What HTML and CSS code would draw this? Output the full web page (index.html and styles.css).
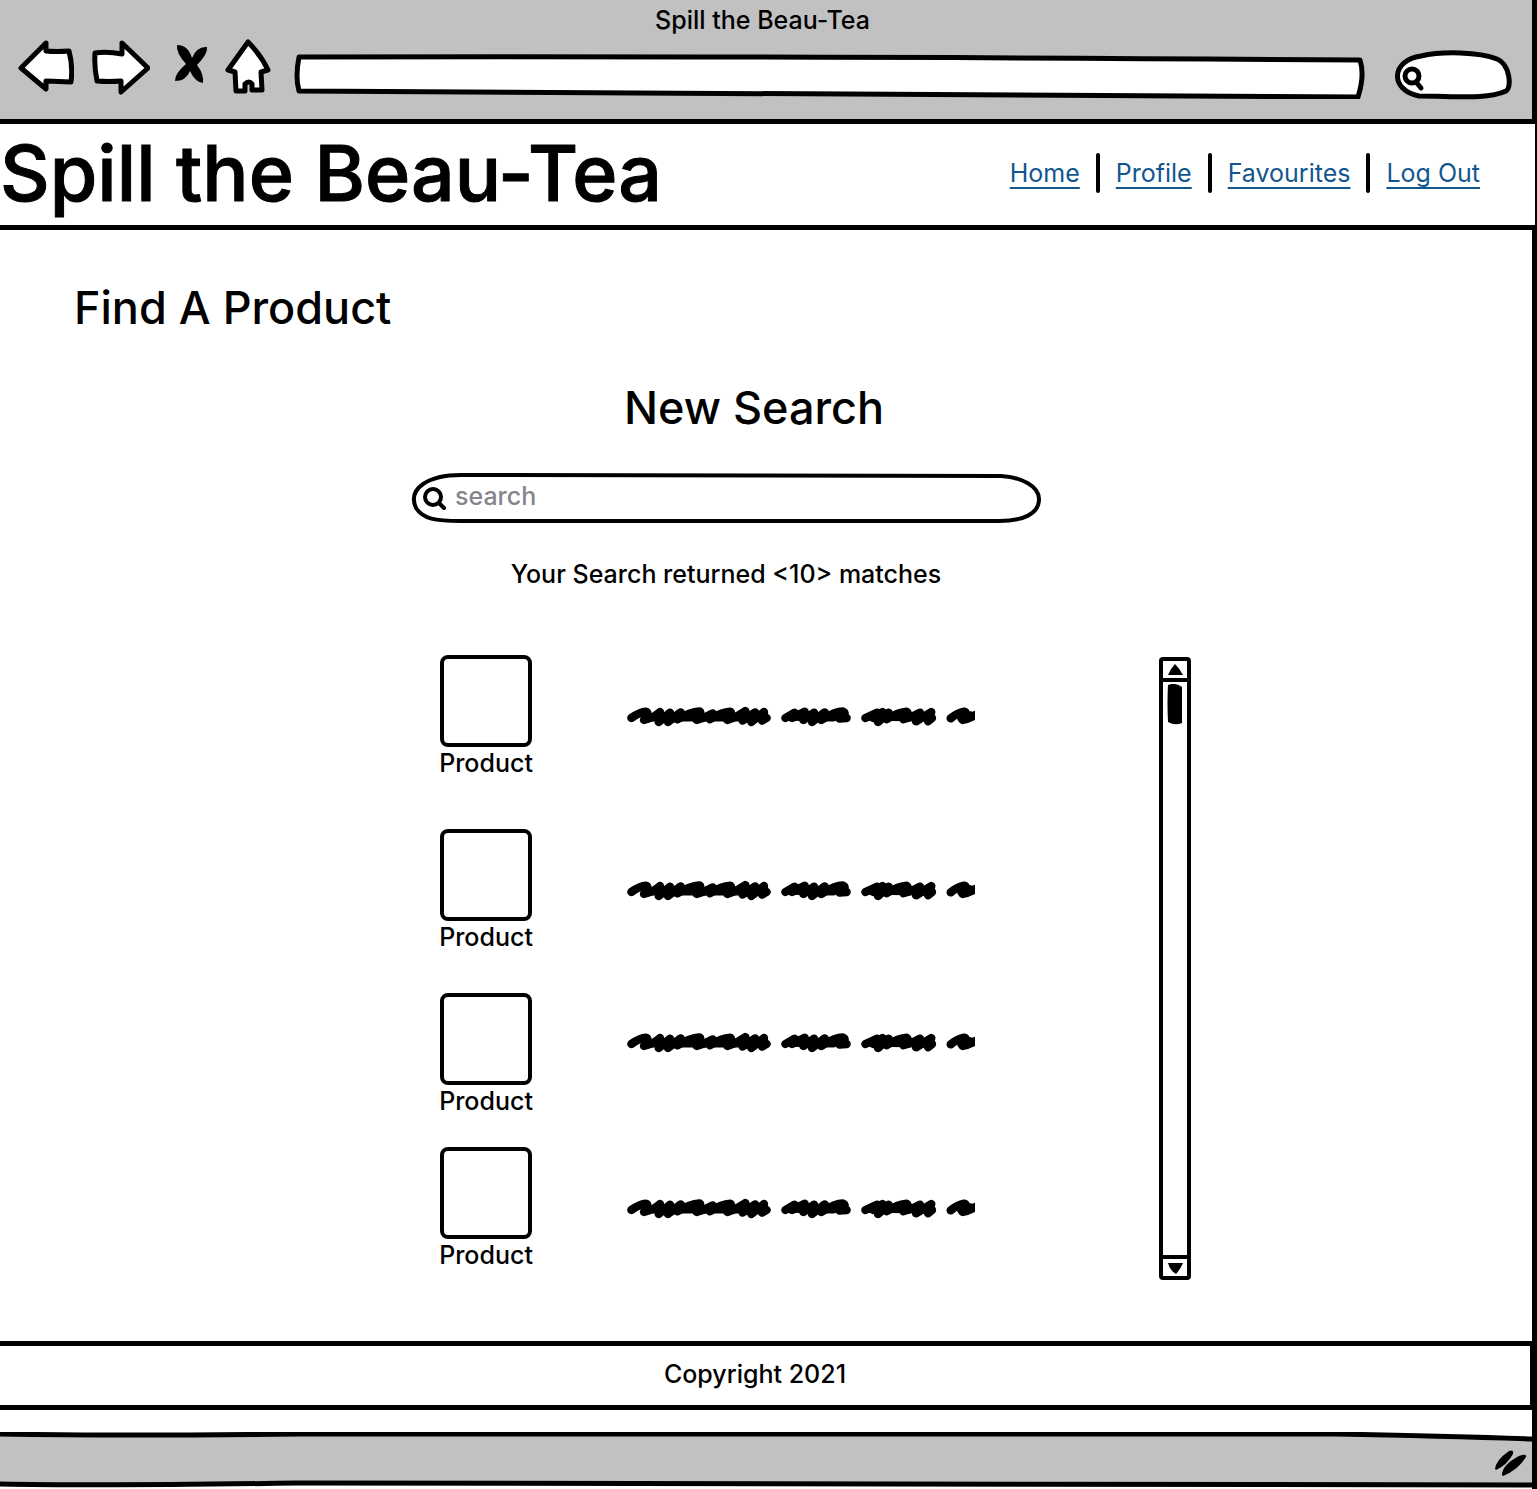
FILE: index.html
```html
<!DOCTYPE html>
<html lang="en">
<head>
<meta charset="utf-8">
<meta name="viewport" content="width=device-width, initial-scale=1">
<title>Spill the Beau-Tea</title>
<link rel="stylesheet" href="styles.css">
</head>
<body>
<svg class="defs" aria-hidden="true">
  <symbol id="scribble" viewBox="21 45 1044 72">
    <g fill="none" stroke="#000" stroke-width="25" stroke-linecap="round" stroke-linejoin="round">
      <path d="M34 84Q60 66 78 65Q88 68 72 90Q100 84 120 66L116 96L150 68L144 96L182 67Q184 76 172 88Q210 66 238 64Q246 68 230 90Q255 84 278 70L270 88Q305 66 330 65Q338 68 322 90Q350 82 376 63L368 92L405 67L394 96L432 66L426 92L440 84"/>
      <path d="M496 84L524 68L516 84L554 65L550 90L582 68L576 96L614 67Q616 78 604 90Q645 64 668 64Q684 70 658 86L680 84"/>
      <path d="M736 84L772 68L760 84L788 66L774 96L806 68L800 88Q835 66 860 65Q868 70 850 88Q880 80 900 68L888 94L934 66L924 94L936 84"/>
      <path d="M992 85Q1014 68 1032 65Q1044 68 1028 90Q1050 86 1078 68"/>
      <path d="M76 82L436 82M508 80L640 82M750 80L930 82M1024 84L1052 76"/>
    </g>
  </symbol>
</svg>
<div class="window">
  <div class="chrome">
    <p class="window-title">Spill the Beau-Tea</p>
    <div class="toolbar">
      <button class="tool" type="button" aria-label="Back">
        <svg width="56" height="54" viewBox="0 0 56 54"><path d="M28 4L3 29L28 50V42L53 43Q55 27 51 12Q38 13 28 12Z"/></svg>
      </button>
      <button class="tool" type="button" aria-label="Forward">
        <svg width="60" height="56" viewBox="0 0 60 56"><path d="M32 4L58 29L31 53V42Q19 43 7 42Q4 27 5 14Q17 12 32 15Z"/></svg>
      </button>
      <button class="tool solid" type="button" aria-label="Stop">
        <svg width="34" height="40" viewBox="0 0 34 40"><path d="M2 1Q13 1 17 14Q22 2 32 3Q33 10 22 21Q29 30 28 39Q20 38 15 27Q11 37 0 37Q0 29 11 20Q1 9 2 1Z"/></svg>
      </button>
      <button class="tool" type="button" aria-label="Home">
        <svg width="46" height="56" viewBox="0 0 46 56"><path d="M23 3L3 31L10 33L11 52H20V45Q24 41 27 45L27 51H37L36 33L43 31Q36 16 23 3Z"/></svg>
      </button>
      <label class="field address">
        <svg viewBox="0 0 1070 46" preserveAspectRatio="none" aria-hidden="true"><path vector-effect="non-scaling-stroke" d="M5 4Q500 3 1065 7Q1070 22 1063 44Q600 42 5 38Q1 24 5 4Z"/></svg>
        <input type="text" aria-label="Address">
      </label>
      <label class="field finder">
        <svg viewBox="0 0 120 50" aria-hidden="true"><path d="M26 46C-4 40-2 10 28 6C50 1 86 2 104 9C117 14 119 38 113 41C94 50 62 46 26 46Z"/><circle cx="19" cy="26" r="7"/><path d="M23 32L28 38"/></svg>
        <input type="search" aria-label="Web search">
      </label>
    </div>
  </div>

  <header class="site-header">
    <div class="brand">Spill the Beau-Tea</div>
    <nav>
      <ul class="links">
        <li><a href="#home">Home</a></li>
        <li><a href="#profile">Profile</a></li>
        <li><a href="#favourites">Favourites</a></li>
        <li><a href="#logout">Log Out</a></li>
      </ul>
    </nav>
  </header>

  <main>
    <h1>Find A Product</h1>
    <h2>New Search</h2>
    <form class="search">
      <label class="field">
        <svg class="outline" viewBox="0 0 630 52" preserveAspectRatio="none" aria-hidden="true"><path vector-effect="non-scaling-stroke" d="M50 3L590 4C610 5 628 14 628 27C628 42 612 49 588 49H50C24 49 12 47 5 36C-4 16 18 3 50 3Z"/></svg>
        <svg class="lens" width="24" height="24" viewBox="0 0 24 24" aria-hidden="true"><circle cx="10" cy="11" r="8"/><path d="M16 17L21 22"/></svg>
        <input type="search" placeholder="search" aria-label="Search products">
      </label>
    </form>
    <p class="matches">Your Search returned &lt;10&gt; matches</p>

    <section class="results">
      <ul class="products">
        <li><button class="thumb" type="button" aria-label="Open product"></button><span class="name">Product</span><svg class="text"><use href="#scribble"/></svg></li>
        <li><button class="thumb" type="button" aria-label="Open product"></button><span class="name">Product</span><svg class="text"><use href="#scribble"/></svg></li>
        <li class="raised"><button class="thumb" type="button" aria-label="Open product"></button><span class="name">Product</span><svg class="text"><use href="#scribble"/></svg></li>
        <li><button class="thumb" type="button" aria-label="Open product"></button><span class="name">Product</span><svg class="text"><use href="#scribble"/></svg></li>
      </ul>
      <div class="scroller">
        <button type="button" aria-label="Scroll up"><svg width="16" height="12" viewBox="0 0 16 12"><path d="M1 11Q4 4 8 0Q13 5 16 11Z"/></svg></button>
        <div class="track"><svg width="16" height="42" viewBox="0 0 16 42"><path d="M1 1Q8 -2 15 3V39Q8 42 1 38Q0 19 1 1Z"/></svg></div>
        <button type="button" aria-label="Scroll down"><svg width="16" height="12" viewBox="0 0 16 12"><path d="M1 1H16Q13 8 9 12Q3 9 1 1Z"/></svg></button>
      </div>
    </section>
  </main>

  <footer>Copyright 2021</footer>
  <div class="status">
    <svg class="edges" viewBox="0 0 1537 57" preserveAspectRatio="none" aria-hidden="true">
      <path d="M0 2Q120 5 300 2H1340Q1450 4 1537 7V52Q1100 55 700 52T0 52Z" fill="#c1c1c1"/>
      <path d="M0 2Q120 4 300 2H1340Q1450 4 1537 7M0 52Q100 54 300 51Q600 54 1537 53" fill="none" stroke="#000" stroke-width="5"/>
    </svg>
    <svg class="grip" width="32" height="26" viewBox="0 0 32 26" aria-hidden="true"><path d="M0 19Q1 10 14 1Q19 -1 18 4Q12 15 1 20ZM7 25Q7 15 24 6Q32 3 31 7Q23 20 8 26Z"/></svg>
  </div>
</div>
</body>
</html>
```
FILE: styles.css
```css
* { box-sizing: border-box; margin: 0; }

body {
  background: #fff;
  color: #000;
  font: 500 25px/32px Inter, "Open Sans", sans-serif;
}

button, input {
  border: 0;
  padding: 0;
  background: none;
  color: inherit;
  font: inherit;
  outline: 0;
}

ul { padding: 0; list-style: none; }
svg { display: block; }
.defs { position: absolute; width: 0; height: 0; }

.window { border-right: 5px solid #000; }

/* Browser frame */
.chrome {
  padding: 4px 19px 19px 18px;
  background: #c1c1c1;
  border-bottom: 5px solid #000;
}
.window-title { padding-right: 6px; text-align: center; }
.toolbar { display: flex; align-items: flex-start; padding-top: 3px; }
.tool { flex: none; margin-right: 16px; }
.tool svg {
  fill: #fff;
  stroke: #000;
  stroke-width: 5px;
  stroke-linejoin: round;
}
.tool.solid { margin: 5px 16px 0 9px; }
.tool.solid svg { fill: #000; stroke: none; }

.field { display: grid; align-items: center; }
.field > * { grid-area: 1 / 1; min-width: 0; }
.field svg {
  width: 100%;
  height: 100%;
  fill: #fff;
  stroke: #000;
  stroke-width: 5px;
  stroke-linejoin: round;
  stroke-linecap: round;
}
.field input { position: relative; width: 100%; }
.address { flex: 1; height: 46px; margin: 14px 28px 0 7px; }
.address input { padding: 0 12px; }
.finder { flex: none; width: 120px; height: 50px; margin-top: 11px; }
.finder input { padding: 0 16px 0 32px; }

/* Site header */
.site-header {
  position: relative;
  display: flex;
  align-items: center;
  justify-content: space-between;
  height: 106px;
  margin-right: -3px;
  background: #fff;
  border-bottom: 5px solid #000;
}
.brand {
  padding-bottom: 4px;
  font-size: 77px;
  line-height: 96px;
  -webkit-text-stroke: 1px currentColor;
}
.links { display: flex; padding: 0 55px 4px 0; }
.links li { display: flex; align-items: center; }
.links a {
  color: #12568f;
  font-weight: 400;
  text-underline-offset: 5px;
  text-decoration-thickness: 2px;
  text-decoration-skip-ink: none;
}
.links li + li::before {
  content: "";
  width: 4px;
  height: 40px;
  margin: 0 16px;
  border-radius: 2px;
  background: #000;
}

/* Page */
h1, h2 { font-size: 45px; line-height: 60px; font-weight: 500; }
h1 { padding: 48px 0 0 74px; }
h2 { padding: 40px 24px 0 0; text-align: center; }
.search { display: flex; justify-content: center; padding: 34px 80px 0 0; }
.search .field { width: 630px; height: 52px; }
.search .outline { stroke-width: 4px; }
.search .lens { width: 24px; height: 24px; margin-left: 12px; fill: none; stroke-width: 4px; }
.search input { padding: 0 20px 4px 44px; }
.search ::placeholder { color: #85858c; opacity: 1; }
.matches { padding: 34px 80px 0 0; text-align: center; }

.results {
  display: flex;
  justify-content: space-between;
  width: 49%;
  min-width: 620px;
  margin: 65px 0 61px 440px;
}
.products {
  display: grid;
  gap: 30px;
  padding-bottom: 9px;
}
.products li {
  display: grid;
  grid-template: 92px 32px / 92px 348px;
  column-gap: 95px;
}
.products li:first-child { margin-bottom: 20px; }
.products li:nth-child(2) { margin-bottom: 10px; }
.thumb { border: 4px solid #000; border-radius: 8px; }
.name { grid-area: 2 / 1; justify-self: center; }
.text { grid-area: 1 / 2; width: 348px; height: 24px; margin-top: 50px; }
.raised .text { margin-top: 38px; }

.scroller {
  display: flex;
  flex-direction: column;
  width: 32px;
  margin-top: 2px;
  border: 4px solid #000;
  border-radius: 4px;
}
.scroller button { display: grid; place-items: center; height: 17px; }
.track {
  flex: 1;
  padding: 2px 4px;
  border: solid #000;
  border-width: 4px 0;
}

footer {
  height: 69px;
  padding: 12px 20px 0 0;
  border: solid #000;
  border-width: 5px 2px 5px 0;
  text-align: center;
}

/* Window status bar */
.status {
  display: grid;
  height: 57px;
  margin-top: 22px;
}
.status > * { grid-area: 1 / 1; }
.edges { width: 100%; height: 57px; }
.grip { place-self: center end; margin: 4px 5px 0 0; }
```
